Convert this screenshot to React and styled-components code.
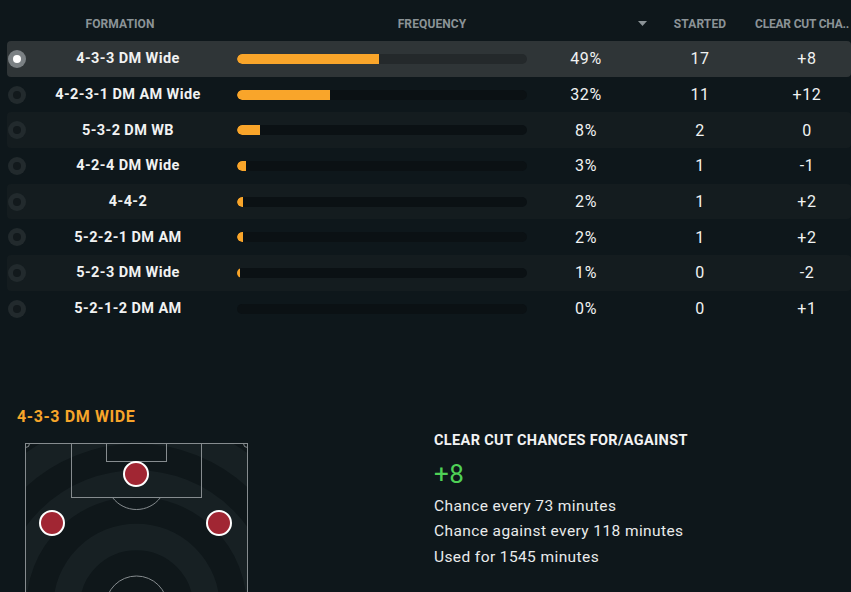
import React from "react";
import styled, { createGlobalStyle } from "styled-components";

const Global = createGlobalStyle`
  html, body { margin: 0; padding: 0; background: #0e171b; overflow: hidden; }
  body { font-family: Roboto, "Liberation Sans", sans-serif; color: #eef0f0; }
`;

const Page = styled.div`
  width: 851px;
  height: 592px;
  overflow: hidden;
  background: #0e171b;
`;

const HeaderRow = styled.div`
  display: grid;
  grid-template-columns: 30px 180px 417px 30px 86px 1fr;
  height: 41px;
  padding-top: 6px;
  box-sizing: border-box;
  align-items: center;
  font-size: 12px;
  font-weight: 700;
  color: #8b9397;
  text-transform: uppercase;
  letter-spacing: 0.1px;
`;

const HeadCell = styled.div`
  padding-left: ${(p) => p.$pl || 0}px;
  white-space: nowrap;
  overflow: hidden;
  display: flex;
  letter-spacing: ${(p) => (p.$tight ? "-0.2px" : "0.1px")};
  justify-content: ${(p) => (p.$align === "left" ? "flex-start" : "center")};
`;

const Rows = styled.div`
  display: flex;
  flex-direction: column;
  margin-left: 7px;
`;

const Row = styled.div`
  display: grid;
  grid-template-columns: 20px 202px 298px 118px 110px 1fr;
  align-items: center;
  height: 35.7px;
  border-radius: 4px;
  background: ${(p) => (p.$selected ? "#2f3537" : p.$alt ? "#141c1f" : "transparent")};
`;

const Radio = styled.span`
  justify-self: center;
  width: 18px;
  height: 18px;
  border-radius: 50%;
  background: ${(p) => (p.$on ? "#7b8184" : "#222a2d")};
  display: flex;
  align-items: center;
  justify-content: center;
  &::after {
    content: "";
    width: 8px;
    height: 8px;
    border-radius: 50%;
    background: ${(p) => (p.$on ? "#ffffff" : "#12191c")};
  }
`;

const Name = styled.div`
  text-align: center;
  font-size: 14.5px;
  font-weight: 700;
  letter-spacing: 0.4px;
  color: #f1f2f2;
`;

const BarCell = styled.div`
  padding-left: 8px;
`;

const Track = styled.div`
  height: 10px;
  border-radius: 5px;
  background: ${(p) => (p.$selected ? "#24292b" : "#0b1114")};
  overflow: hidden;
`;

const Fill = styled.div`
  height: 100%;
  background: #f9a52a;
  border-radius: 5px 0 0 5px;
`;

const Num = styled.div`
  text-align: center;
  padding-left: ${(p) => p.$pl || 0}px;
  font-size: 16px;
  letter-spacing: 0.6px;
  color: #f1f2f2;
`;

const Details = styled.div`
  display: flex;
  padding-top: 80px;
`;

const LeftCol = styled.div`
  width: 417px;
  padding-left: 17px;
  display: flex;
  flex-direction: column;
`;

const Title = styled.div`
  font-size: 16px;
  line-height: 20px;
  font-weight: 700;
  letter-spacing: 0.6px;
  color: #f7a52a;
`;

const PitchBox = styled.div`
  margin-top: 16px;
  margin-left: 8px;
  width: 224px;
  height: 330px;
`;

const Stats = styled.div`
  margin-top: 25px;
  display: flex;
  flex-direction: column;
`;

const StatHead = styled.div`
  font-size: 14.5px;
  line-height: 18px;
  font-weight: 700;
  letter-spacing: 0.35px;
  color: #f2f3f3;
`;

const Big = styled.div`
  margin-top: 9px;
  font-size: 26px;
  line-height: 30px;
  color: #4fd156;
  letter-spacing: 0.5px;
`;

const Lines = styled.div`
  margin-top: 5px;
  display: flex;
  flex-direction: column;
`;

const Line = styled.div`
  font-size: 15.5px;
  line-height: 25.7px;
  color: #e9ebeb;
  letter-spacing: 0.4px;
`;

const data = [
  { name: "4-3-3 DM Wide", freq: 49, started: 17, ccc: "+8" },
  { name: "4-2-3-1 DM AM Wide", freq: 32, started: 11, ccc: "+12" },
  { name: "5-3-2 DM WB", freq: 8, started: 2, ccc: "0" },
  { name: "4-2-4 DM Wide", freq: 3, started: 1, ccc: "-1" },
  { name: "4-4-2", freq: 2, started: 1, ccc: "+2" },
  { name: "5-2-2-1 DM AM", freq: 2, started: 1, ccc: "+2" },
  { name: "5-2-3 DM Wide", freq: 1, started: 0, ccc: "-2" },
  { name: "5-2-1-2 DM AM", freq: 0, started: 0, ccc: "+1" },
];

function Pitch() {
  const line = "#868c8f";
  const cx = 111.5;
  const cy = 164;
  const bands = [70, 123.5, 176.5, 229.5];
  return (
    <svg width="224" height="330" viewBox="0 0 224 330">
      <defs>
        <clipPath id="pc">
          <rect x="0.5" y="0.5" width="222" height="329" />
        </clipPath>
      </defs>
      <rect x="0.5" y="0.5" width="222" height="329" fill="#0f171a" />
      <g clipPath="url(#pc)">
        {bands.map((r) => (
          <circle key={r} cx={cx} cy={cy} r={r} fill="none" stroke="#172023" strokeWidth="26.5" />
        ))}
      </g>
      <rect x="0.5" y="0.5" width="222" height="329" fill="none" stroke={line} strokeWidth="1" />
      <path d="M0.5 4.5 A4 4 0 0 0 4.5 0.5" fill="none" stroke={line} />
      <path d="M218.5 0.5 A4 4 0 0 0 222.5 4.5" fill="none" stroke={line} />
      <rect x="46.5" y="0.5" width="130" height="54" fill="none" stroke={line} />
      <rect x="81.5" y="0.5" width="60" height="18" fill="none" stroke={line} />
      <path d="M87.5 54.5 A30 30 0 0 0 135.5 54.5" fill="none" stroke={line} />
      <circle cx={cx} cy={cy} r="31" fill="none" stroke={line} />
      <line x1="0.5" y1={cy} x2="222.5" y2={cy} stroke={line} />
      {[
        [111, 31],
        [27, 80],
        [194, 80],
      ].map(([x, y]) => (
        <circle key={x} cx={x} cy={y} r="12" fill="#a12633" stroke="#ffffff" strokeWidth="2" />
      ))}
    </svg>
  );
}

export default function App() {
  return (
    <Page>
      <Global />
      <HeaderRow>
        <div />
        <HeadCell>Formation</HeadCell>
        <HeadCell $pl={27}>Frequency</HeadCell>
        <HeadCell>
          <svg width="9" height="5" viewBox="0 0 9 5">
            <path d="M0 0 H9 L4.5 5 Z" fill="#8b9397" />
          </svg>
        </HeadCell>
        <HeadCell>Started</HeadCell>
        <HeadCell $align="left" $pl={12} $tight>
          Clear Cut Cha..
        </HeadCell>
      </HeaderRow>
      <Rows>
        {data.map((d, i) => (
          <Row key={d.name} $selected={i === 0} $alt={i % 2 === 0}>
            <Radio $on={i === 0} />
            <Name>{d.name}</Name>
            <BarCell>
              <Track $selected={i === 0}>
                {d.freq > 0 && <Fill style={{ width: `${d.freq}%` }} />}
              </Track>
            </BarCell>
            <Num>{d.freq}%</Num>
            <Num>{d.started}</Num>
            <Num $pl={8}>{d.ccc}</Num>
          </Row>
        ))}
      </Rows>
      <Details>
        <LeftCol>
          <Title>4-3-3 DM WIDE</Title>
          <PitchBox>
            <Pitch />
          </PitchBox>
        </LeftCol>
        <Stats>
          <StatHead>CLEAR CUT CHANCES FOR/AGAINST</StatHead>
          <Big>+8</Big>
          <Lines>
            <Line>Chance every 73 minutes</Line>
            <Line>Chance against every 118 minutes</Line>
            <Line>Used for 1545 minutes</Line>
          </Lines>
        </Stats>
      </Details>
    </Page>
  );
}
